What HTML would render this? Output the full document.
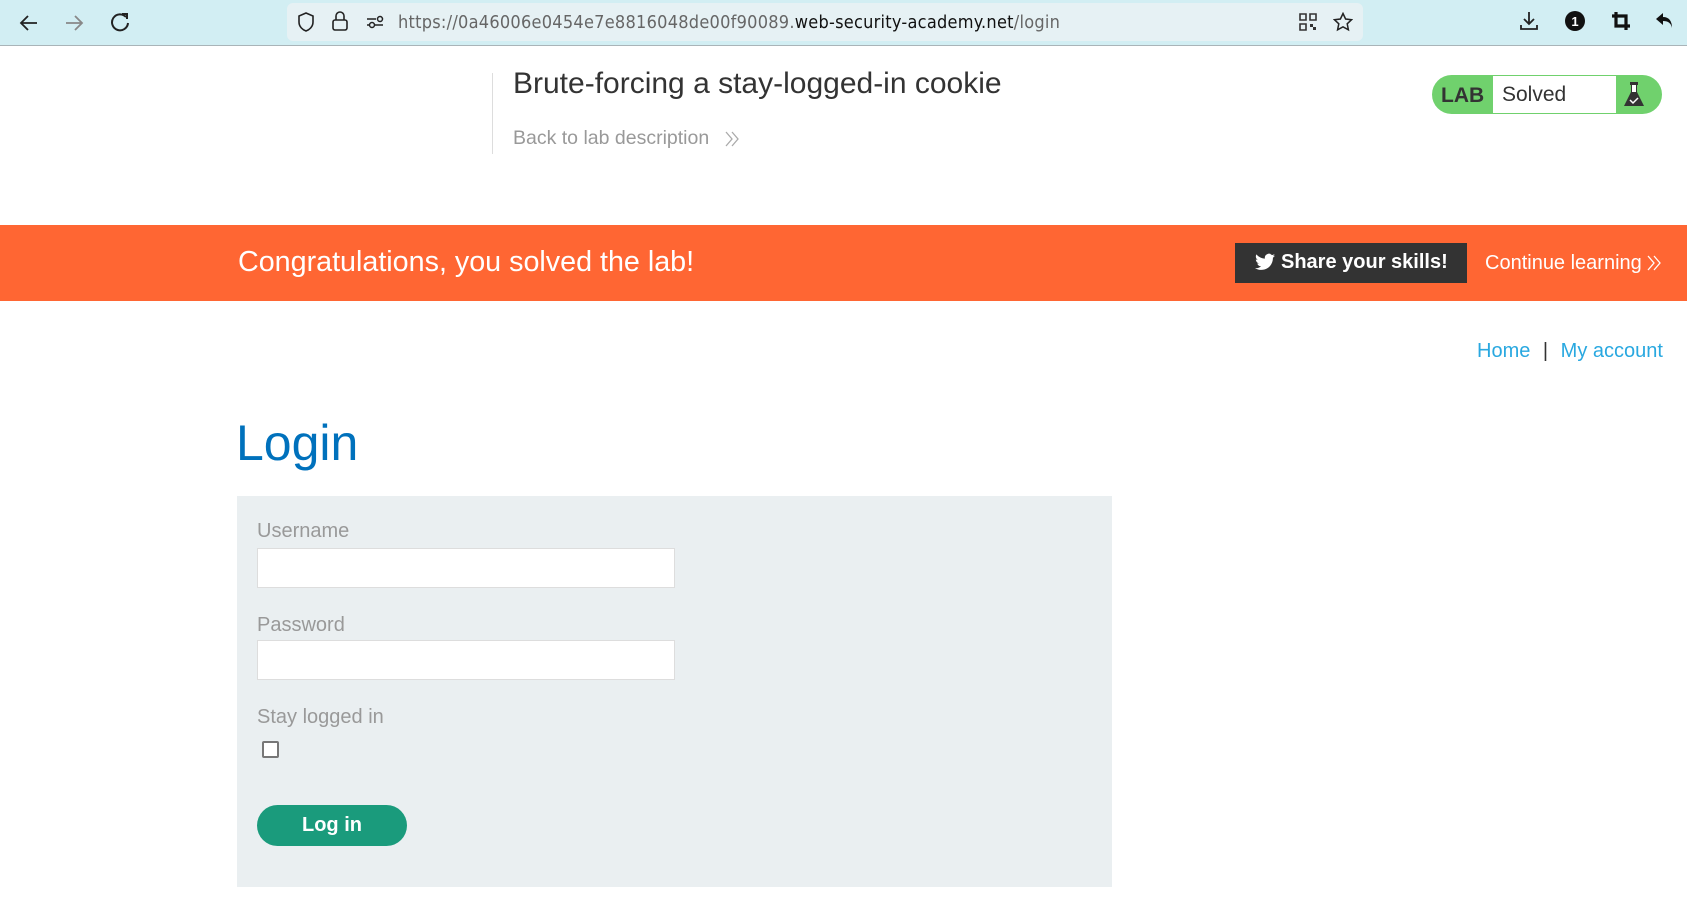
<!DOCTYPE html>
<html><head><meta charset="utf-8"><style>
*{box-sizing:border-box;margin:0;padding:0}
body{width:1687px;height:914px;overflow:hidden;background:#fff;font-family:"Liberation Sans",Arial,sans-serif;position:relative}
.abs{position:absolute}
#bar{left:0;top:0;width:1687px;height:46px;background:#d2eef3;border-bottom:1px solid #a9b4b8}
#url{left:287px;top:3px;width:1076px;height:38px;background:#e6f1f4;border-radius:6px}
.ic{position:absolute}
</style></head><body>
<div id="bar" class="abs">
 <svg class="ic" style="left:18px;top:12px" width="22" height="22" viewBox="0 0 22 22"><path d="M19 11H4M10 4l-7 7 7 7" stroke="#222" stroke-width="1.8" fill="none"/></svg>
 <svg class="ic" style="left:63px;top:12px" width="22" height="22" viewBox="0 0 22 22"><path d="M3 11h15M12 4l7 7-7 7" stroke="#888" stroke-width="1.8" fill="none"/></svg>
 <svg class="ic" style="left:109px;top:11px" width="22" height="22" viewBox="0 0 22 22"><path d="M17 6A8 8 0 1 0 19 12" stroke="#222" stroke-width="2" fill="none"/><path d="M13 3h5v5" stroke="#222" stroke-width="2" fill="none"/></svg>
</div>
<div id="url" class="abs">
 <svg class="ic" style="left:9px;top:8px" width="20" height="22" viewBox="0 0 20 22"><path d="M10 2l7 3v6c0 5-4 8-7 9-3-1-7-4-7-9V5z" stroke="#222" stroke-width="1.6" fill="none"/></svg>
 <svg class="ic" style="left:44px;top:7px" width="18" height="22" viewBox="0 0 18 22"><rect x="2" y="10" width="14" height="10" rx="2" stroke="#222" stroke-width="1.6" fill="none"/><path d="M5 10V6a4 4 0 0 1 8 0v4" stroke="#222" stroke-width="1.6" fill="none"/></svg>
 <svg class="ic" style="left:78px;top:10px" width="20" height="18" viewBox="0 0 20 18"><path d="M2 6h9M2 12h3M10 12h8" stroke="#222" stroke-width="1.6"/><circle cx="15" cy="6" r="2.5" stroke="#222" stroke-width="1.5" fill="none"/><circle cx="7" cy="12" r="2.5" stroke="#222" stroke-width="1.5" fill="none"/></svg>
 <div class="abs" style="left:111px;top:9px;font-size:18px;color:#666;white-space:nowrap;font-family:'DejaVu Sans Condensed','Liberation Sans',sans-serif;letter-spacing:0.25px">https://0a46006e0454e7e8816048de00f90089.<span style="color:#111">web-security-academy.net</span>/login</div>
 <svg class="ic" style="left:1012px;top:10px" width="18" height="18" viewBox="0 0 18 18"><path d="M1 1h6v6H1zM11 1h6v6h-6zM1 11h6v6H1z" stroke="#333" stroke-width="1.6" fill="none"/><path d="M11 11h3v3h-3zM14 14h3v3h-3z" fill="#333"/></svg>
 <svg class="ic" style="left:1046px;top:9px" width="20" height="20" viewBox="0 0 20 20"><path d="M10 1.5l2.6 5.5 6 .7-4.4 4.1 1.2 6L10 14.8 4.6 17.8l1.2-6L1.4 7.7l6-.7z" stroke="#222" stroke-width="1.5" fill="none"/></svg>
</div>
<svg class="ic" style="left:1518px;top:10px" width="22" height="22" viewBox="0 0 22 22"><path d="M11 2v12M6 9l5 5 5-5M3 15v4h16v-4" stroke="#222" stroke-width="1.8" fill="none"/></svg>
<svg class="ic" style="left:1564px;top:10px" width="22" height="22" viewBox="0 0 22 22"><circle cx="11" cy="11" r="10" fill="#111"/><text x="11" y="16" text-anchor="middle" font-size="13" font-weight="bold" fill="#fff" font-family="Liberation Sans">1</text></svg>
<svg class="ic" style="left:1610px;top:10px" width="22" height="22" viewBox="0 0 22 22"><path d="M6 2v14h14M2 6h14v14" stroke="#111" stroke-width="3.2" fill="none"/></svg>
<svg class="ic" style="left:1654px;top:10px" width="22" height="22" viewBox="0 0 22 22"><path d="M9 3L2 9l7 6V11c5 0 8 2 9 7 0-7-3-11-9-11z" fill="#111"/></svg>

<div class="abs" style="left:492px;top:73px;width:1px;height:81px;background:#ddd"></div>
<div class="abs" style="left:513px;top:67px;font-size:30px;color:#333;white-space:nowrap">Brute-forcing a stay-logged-in cookie</div>
<div class="abs" style="left:513px;top:127px;font-size:19.5px;color:#999;white-space:nowrap">Back to lab description</div>
<svg class="ic" style="left:724px;top:130px" width="16" height="18" viewBox="0 0 16 18"><path d="M2 2l6 7-6 7M8 2l6 7-6 7" stroke="#aaa" stroke-width="1.3" fill="none"/></svg>

<div class="abs" style="left:1432px;top:75px;width:230px;height:39px;background:#70d16d;border-radius:20px"></div>
<div class="abs" style="left:1441px;top:84px;font-size:21px;font-weight:bold;color:#333">LAB</div>
<div class="abs" style="left:1493px;top:76px;width:123px;height:37px;background:#fff"></div>
<div class="abs" style="left:1502px;top:83px;font-size:21px;color:#333">Solved</div>
<svg class="ic" style="left:1623px;top:82px" width="22" height="26" viewBox="0 0 22 26"><rect x="7" y="0" width="8" height="3" fill="#333"/><path d="M8 3h6v7l7 14H1l7-14z" fill="#333"/><path d="M9 3h4v7H9z" fill="#fff"/><path d="M7 18l3 3 5-5" stroke="#fff" stroke-width="1.5" fill="none"/></svg>

<div class="abs" style="left:0;top:225px;width:1687px;height:76px;background:#ff6633"></div>
<div class="abs" style="left:238px;top:246px;font-size:28.7px;color:#fff;white-space:nowrap">Congratulations, you solved the lab!</div>
<div class="abs" style="left:1235px;top:243px;width:232px;height:40px;background:#333"></div>
<svg class="ic" style="left:1255px;top:253px" width="20" height="18" viewBox="0 0 24 20"><path d="M24 2.4c-.9.4-1.8.6-2.8.8 1-.6 1.800-1.6 2.2-2.7-1 .6-2 1-3.1 1.2A4.9 4.9 0 0 0 11.9 6C7.8 5.8 4.2 3.9 1.7.9c-1.4 2.3-.6 5.2 1.5 6.6-.8 0-1.6-.3-2.2-.6 0 2.4 1.7 4.4 3.900 4.8-.7.2-1.5.2-2.2.1.6 2 2.4 3.4 4.6 3.4A9.9 9.9 0 0 1 0 17.3 14 14 0 0 0 7.5 19.5c9.1 0 14-7.5 14-14v-.6c1-.7 1.8-1.6 2.5-2.5z" fill="#fff"/></svg>
<div class="abs" style="left:1281px;top:251px;font-size:20px;font-weight:bold;color:#fff;white-space:nowrap">Share your skills!</div>
<div class="abs" style="left:1485px;top:252px;font-size:20px;color:#fff;white-space:nowrap">Continue learning</div>
<svg class="ic" style="left:1646px;top:254px" width="16" height="18" viewBox="0 0 16 18"><path d="M2 2l6 7-6 7M8 2l6 7-6 7" stroke="#fff" stroke-width="1.3" fill="none"/></svg>

<div class="abs" style="left:1477px;top:340px;font-size:20px;color:#29a8e0;white-space:nowrap">Home <span style="color:#333;margin:0 7px">|</span> My account</div>

<div class="abs" style="left:236px;top:414px;font-size:50px;color:#0071bc">Login</div>
<div class="abs" style="left:237px;top:496px;width:875px;height:391px;background:#eaeff1"></div>
<div class="abs" style="left:257px;top:520px;font-size:20px;color:#999">Username</div>
<div class="abs" style="left:257px;top:548px;width:418px;height:40px;background:#fff;border:1px solid #ddd"></div>
<div class="abs" style="left:257px;top:614px;font-size:20px;color:#999">Password</div>
<div class="abs" style="left:257px;top:640px;width:418px;height:40px;background:#fff;border:1px solid #ddd"></div>
<div class="abs" style="left:257px;top:706px;font-size:20px;color:#999">Stay logged in</div>
<div class="abs" style="left:262px;top:741px;width:17px;height:17px;border:2px solid #777;border-radius:2px;background:#fff"></div>
<div class="abs" style="left:257px;top:805px;width:150px;height:41px;background:#1a9b7c;border-radius:21px;color:#fff;font-size:20px;font-weight:bold;text-align:center;line-height:41px">Log in</div>
</body></html>
